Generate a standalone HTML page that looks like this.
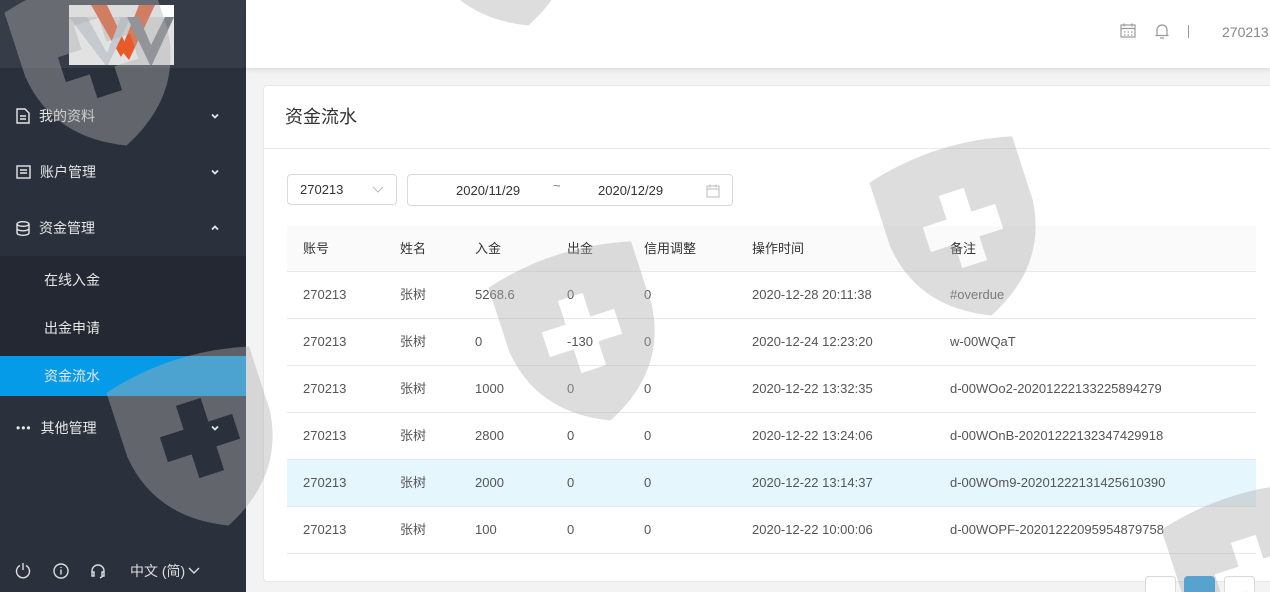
<!DOCTYPE html>
<html style="overflow:hidden;width:1270px;height:592px"><head><meta charset="utf-8"><style>
*{margin:0;padding:0;box-sizing:border-box}
body{width:1270px;height:592px;overflow:hidden;background:#f3f3f3;font-family:"Liberation Sans","Noto Sans CJK SC",sans-serif;position:relative}
.side{position:absolute;left:0;top:0;width:246px;height:592px;background:#2b313c}
.logo{position:absolute;left:0;top:0;width:246px;height:68px;background:#363c48}
.mi{position:absolute;left:0;width:246px;height:56px;color:#e6e6e6;font-size:14px;display:flex;align-items:center;padding-left:16px}
.mi svg{margin-right:9px}
.mi .ar{position:absolute;right:18px;top:25px}
.sub{position:absolute;left:0;top:256px;width:246px;height:140px;background:#232832}
.si{position:absolute;left:44px;color:#e6e6e6;font-size:14px;line-height:16px}
.act{position:absolute;left:0;top:356px;width:246px;height:40px;background:#069be9}
.hdr{position:absolute;left:246px;top:0;width:1024px;height:68px;background:#fff;box-shadow:0 2px 5px rgba(0,0,0,.1)}
.card{position:absolute;left:263px;top:85px;width:1007px;height:497px;background:#fff;border:1px solid #e8e8e8;border-right:none;border-radius:4px 0 0 4px}
.ct{position:absolute;left:285px;top:106px;font-size:18px;color:#333;line-height:22px}
.line{position:absolute;left:264px;width:1006px;height:1px;background:#e8e8e8}
.inp{position:absolute;border:1px solid #d9d9d9;border-radius:4px;background:#fff;font-size:13px;color:#333}
.tab{position:absolute;left:287px;top:226px;width:969px}
.row{position:relative;height:47px;border-bottom:1px solid #e8e8e8;font-size:13px;color:#555}
.row span{position:absolute;top:15px;line-height:16px}
.th{background:#fafafa;height:46px;color:#333}
.hl{background:#e6f6fd}
.pg{position:absolute;top:576px;width:31px;height:16px;border:1px solid #d9d9d9;border-bottom:none;border-radius:4px 4px 0 0;background:#fff}
</style></head><body>
<div class="side">
<div class="logo"></div>
<svg style="position:absolute;left:69px;top:5px" width="105" height="60" viewBox="0 0 105 60">
<rect width="105" height="60" fill="#fff"/><rect y="12" width="105" height="48" fill="#e2e2e2"/>
<polygon points="22,0 38,0 58,42 52,52" fill="#e95a2b"/>
<polygon points="70,0 86,0 60,55 52,45" fill="#e95a2b"/>
<polygon points="0,12 18,12 38,48 52,12 62,12 38,62" fill="#c5cad0"/>
<polygon points="58,12 70,12 82,40 96,12 105,12 82,62" fill="#7d838b"/>
</svg>
<div class="mi" style="top:88px"><svg width="14" height="16" viewBox="0 0 14 16" fill="none" stroke="#e6e6e6" stroke-width="1.4"><path d="M1 1h8l4 4v10H1z M4 8h6M4 11h6"/></svg>我的资料<svg class="ar" width="8" height="6" viewBox="0 0 8 6" fill="none" stroke="#e6e6e6" stroke-width="1.8"><path d="M1 1.5l3 3 3-3"/></svg></div>
<div class="mi" style="top:144px"><svg width="15" height="14" viewBox="0 0 15 14" fill="none" stroke="#e6e6e6" stroke-width="1.4"><rect x="1" y="1" width="13" height="12"/><path d="M4 5h7M4 8h7"/></svg>账户管理<svg class="ar" width="8" height="6" viewBox="0 0 8 6" fill="none" stroke="#e6e6e6" stroke-width="1.8"><path d="M1 1.5l3 3 3-3"/></svg></div>
<div class="mi" style="top:200px"><svg width="14" height="15" viewBox="0 0 14 15" fill="none" stroke="#e6e6e6" stroke-width="1.4"><ellipse cx="7" cy="3" rx="6" ry="2.3"/><path d="M1 3v9c0 1.3 2.7 2.3 6 2.3s6-1 6-2.3V3M1 7.5c0 1.3 2.7 2.3 6 2.3s6-1 6-2.3"/></svg>资金管理<svg class="ar" width="8" height="6" viewBox="0 0 8 6" fill="none" stroke="#e6e6e6" stroke-width="1.8"><path d="M1 4.5l3-3 3 3"/></svg></div>
<div class="sub"></div>
<div class="act"></div>
<div class="si" style="top:272px">在线入金</div>
<div class="si" style="top:320px">出金申请</div>
<div class="si" style="top:368px">资金流水</div>
<div class="mi" style="top:400px"><span style="letter-spacing:1px;margin-right:9px;font-size:12px">•••</span>其他管理<svg class="ar" width="8" height="6" viewBox="0 0 8 6" fill="none" stroke="#e6e6e6" stroke-width="1.8"><path d="M1 1.5l3 3 3-3"/></svg></div>
<svg style="position:absolute;left:15px;top:562px" width="110" height="18" viewBox="0 0 110 18" fill="none" stroke="#ddd" stroke-width="1.4">
<path d="M5 3.5A6.5 6.5 0 1 0 11 3.5M8 1v7"/>
<circle cx="46" cy="9" r="7"/><path d="M46 7.5v5M46 5v1"/>
<path d="M77 12V9a6 6 0 0 1 12 0v3M77 10h2v4h-2zM87 10h2v4h-2zM88 14l-3 2"/>
</svg>
<div style="position:absolute;left:130px;top:563px;color:#ddd;font-size:14px;line-height:16px">中文 (简)</div>
<svg style="position:absolute;left:188px;top:567px" width="12" height="8" viewBox="0 0 12 8" fill="none" stroke="#ddd" stroke-width="1.4"><path d="M1 1l5 5 5-5"/></svg>
</div>
<div class="hdr">
<svg style="position:absolute;left:874px;top:23px" width="60" height="16" viewBox="0 0 60 16" fill="none" stroke="#999" stroke-width="1.2">
<rect x="1" y="2" width="14" height="12"/><path d="M1 5.5h14M4 0.5v3M12 0.5v3M4 9h1.5M7.5 9h1.5M11 9h1.5M4 12h1.5M7.5 12h1.5M11 12h1.5"/>
<path d="M37 12.5V7a5 5 0 0 1 10 0v5.5h1.5h-13zM40 15h4"/>
</svg>
<div style="position:absolute;left:942px;top:25px;width:1px;height:13px;background:#999"></div>
<div style="position:absolute;left:976px;top:24px;font-size:14px;color:#888;line-height:16px">270213</div>
</div>
<div class="card"></div>
<div class="ct">资金流水</div>
<div class="line" style="top:148px"></div>
<div class="inp" style="left:287px;top:174px;width:110px;height:31px;padding:7px 12px;line-height:16px">270213<svg style="position:absolute;right:12px;top:11px" width="12" height="8" viewBox="0 0 12 8" fill="none" stroke="#bbb"><path d="M1 1l5 5 5-5"/></svg></div>
<div class="inp" style="left:407px;top:174px;width:326px;height:32px;line-height:16px">
<span style="position:absolute;left:48px;top:8px">2020/11/29</span>
<span style="position:absolute;left:145px;top:3px;color:#777">~</span>
<span style="position:absolute;left:190px;top:8px">2020/12/29</span>
<svg style="position:absolute;left:298px;top:9px" width="14" height="14" viewBox="0 0 14 14" fill="none" stroke="#bbb"><rect x="1" y="2" width="12" height="11"/><path d="M1 5h12M4 0.5v3M10 0.5v3"/></svg>
</div>
<div class="tab">
<div class="row th"><span style="left:16px">账号</span><span style="left:113px">姓名</span><span style="left:188px">入金</span><span style="left:280px">出金</span><span style="left:357px">信用调整</span><span style="left:465px">操作时间</span><span style="left:663px">备注</span></div>
<div class="row"><span style="left:16px">270213</span><span style="left:113px">张树</span><span style="left:188px">5268.6</span><span style="left:280px">0</span><span style="left:357px">0</span><span style="left:465px">2020-12-28 20:11:38</span><span style="left:663px">#overdue</span></div>
<div class="row"><span style="left:16px">270213</span><span style="left:113px">张树</span><span style="left:188px">0</span><span style="left:280px">-130</span><span style="left:357px">0</span><span style="left:465px">2020-12-24 12:23:20</span><span style="left:663px">w-00WQaT</span></div>
<div class="row"><span style="left:16px">270213</span><span style="left:113px">张树</span><span style="left:188px">1000</span><span style="left:280px">0</span><span style="left:357px">0</span><span style="left:465px">2020-12-22 13:32:35</span><span style="left:663px">d-00WOo2-20201222133225894279</span></div>
<div class="row"><span style="left:16px">270213</span><span style="left:113px">张树</span><span style="left:188px">2800</span><span style="left:280px">0</span><span style="left:357px">0</span><span style="left:465px">2020-12-22 13:24:06</span><span style="left:663px">d-00WOnB-20201222132347429918</span></div>
<div class="row hl"><span style="left:16px">270213</span><span style="left:113px">张树</span><span style="left:188px">2000</span><span style="left:280px">0</span><span style="left:357px">0</span><span style="left:465px">2020-12-22 13:14:37</span><span style="left:663px">d-00WOm9-20201222131425610390</span></div>
<div class="row"><span style="left:16px">270213</span><span style="left:113px">张树</span><span style="left:188px">100</span><span style="left:280px">0</span><span style="left:357px">0</span><span style="left:465px">2020-12-22 10:00:06</span><span style="left:663px">d-00WOPF-20201222095954879758</span></div>
</div>
<div style="position:absolute;left:246px;top:582px;width:1024px;height:10px;background:#f3f3f3"></div>
<div class="pg" style="left:1145px"></div>
<div class="pg" style="left:1184px;background:#1a9ae8;border-color:#1a9ae8"></div>
<div class="pg" style="left:1224px"></div>
<svg style="position:absolute;left:0;top:0" width="1270" height="592">
<defs><path id="sh" fill-rule="evenodd" d="M-75,-72 Q0,-92 75,-72 L75,-5 Q68,62 0,92 Q-68,62 -75,-5 Z M-13,-38 H13 V-13 H38 V13 H13 V38 H-13 V13 H-38 V-13 H-13 Z"/></defs>
<g fill="rgb(173,173,173)" fill-opacity=".42">
<use href="#sh" transform="translate(98,58) rotate(-18)"/>
<use href="#sh" transform="translate(500,-62) rotate(-18)"/>
<use href="#sh" transform="translate(582,333) rotate(-18)"/>
<use href="#sh" transform="translate(963,228) rotate(-18)"/>
<use href="#sh" transform="translate(200,438) rotate(-18)"/>
<use href="#sh" transform="translate(1255,575) rotate(-18)"/>
</g></svg>
</body></html>
